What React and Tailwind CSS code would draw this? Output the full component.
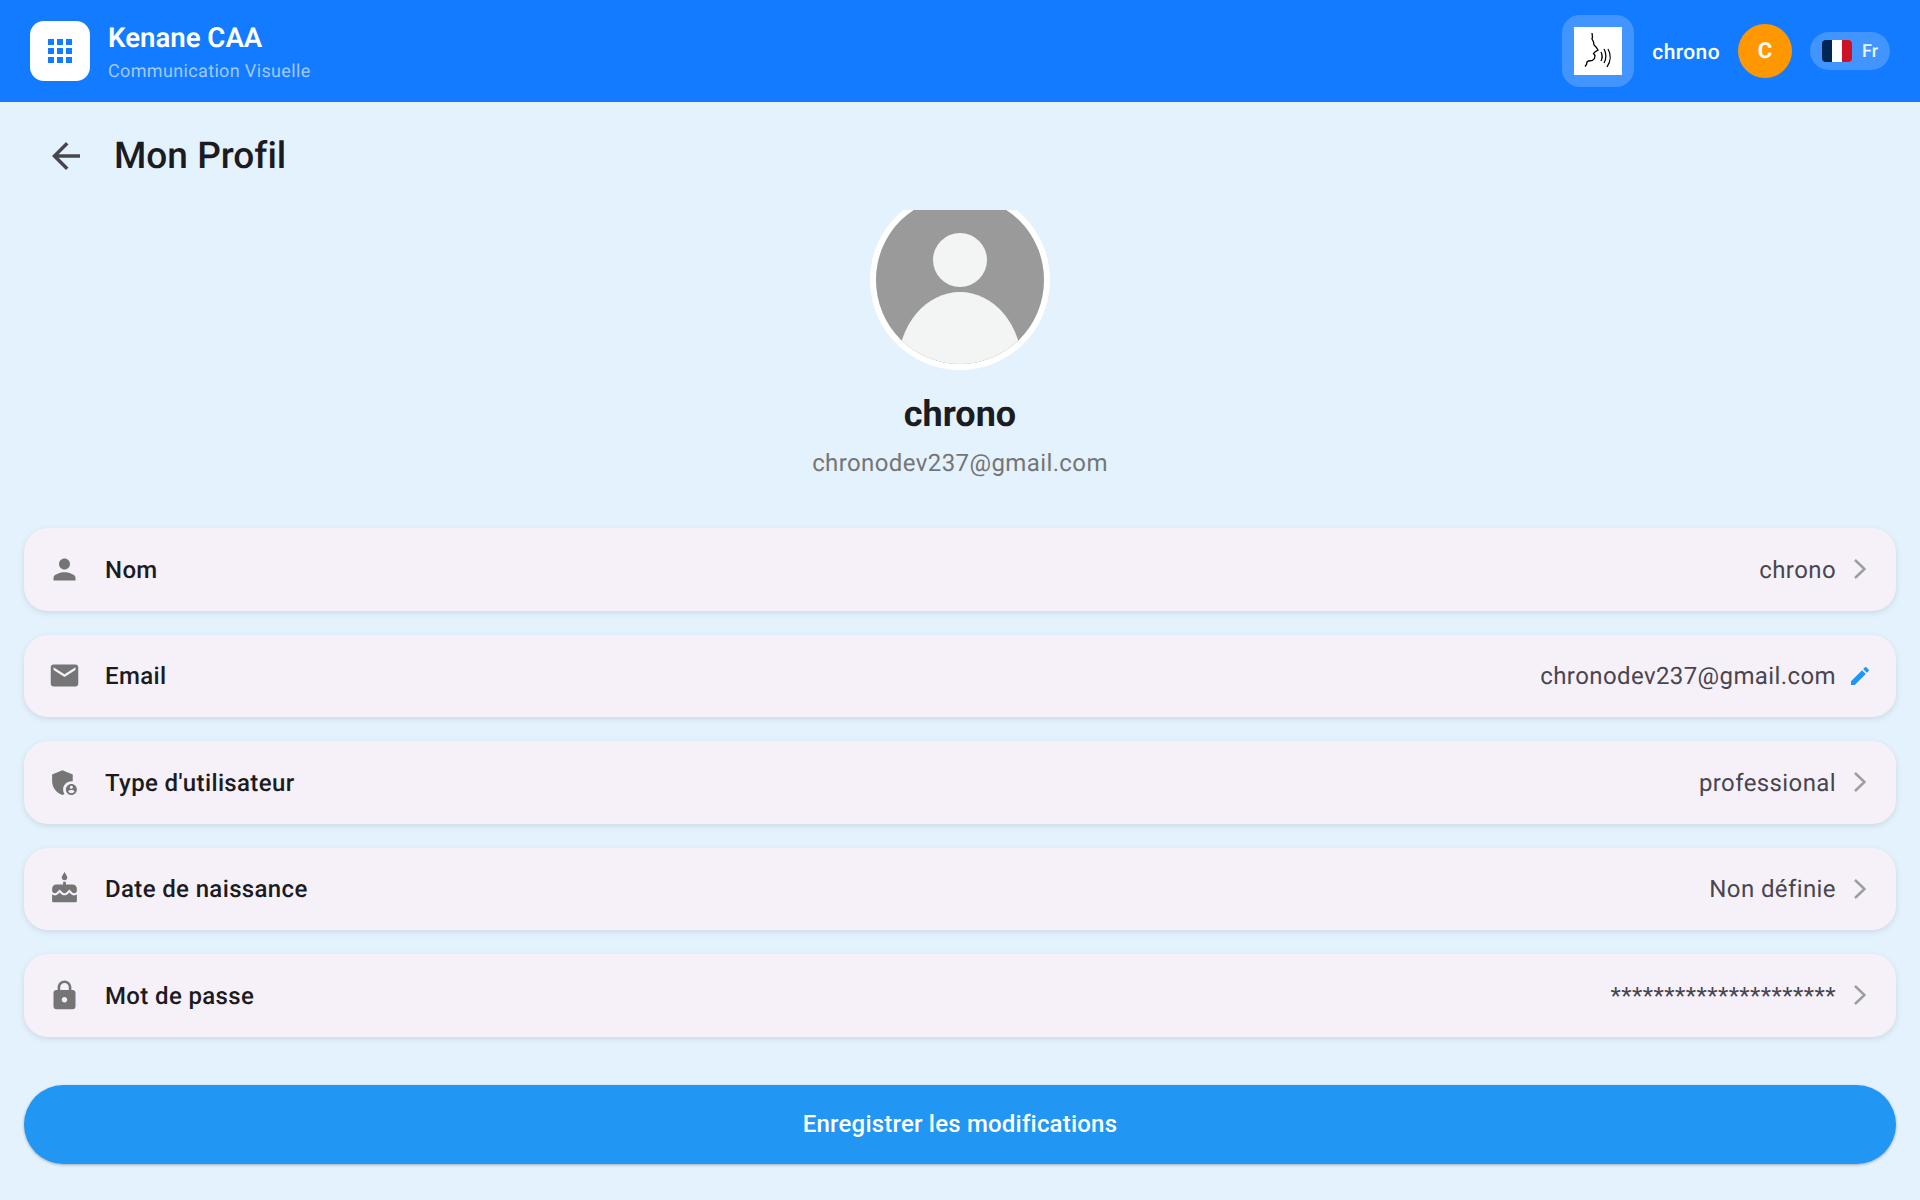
import React from 'react';
import { MdPerson, MdEmail, MdAdminPanelSettings, MdCake, MdLock, MdEdit, MdArrowBack } from 'react-icons/md';

const fields = [
  { icon: MdPerson, label: 'Nom', value: 'chrono' },
  { icon: MdEmail, label: 'Email', value: 'chronodev237@gmail.com', editable: true },
  { icon: MdAdminPanelSettings, label: "Type d'utilisateur", value: 'professional' },
  { icon: MdCake, label: 'Date de naissance', value: 'Non définie' },
  { icon: MdLock, label: 'Mot de passe', value: '*********************' },
];

const GridIcon = () => (
  <svg width="24" height="24" viewBox="0 0 24 24" fill="#137bff">
    {[0, 9, 18].map((y) =>
      [0, 9, 18].map((x) => <rect key={`${x}-${y}`} x={x} y={y} width="6" height="6" />)
    )}
  </svg>
);

const SpeechIcon = () => (
  <svg width="48" height="48" viewBox="0 0 48 48" fill="none" stroke="#000" strokeWidth="1.3" className="bg-white">
    <path d="M18 6l.5 4 -.5 2 1.500 3 .5 3 2 2 2 3-3 2-1.500 1.500 1.500 2-.5 3-2 2-4 .5-1.500 1-.5 2.500-1.500 2" />
    <path d="M27 25c1.500 3 1.500 6 0 9" />
    <path d="M30 22c2.500 4 2.500 10 0 14" />
    <path d="M34 22c3 5 3 12-1 18" />
  </svg>
);

const Chevron = () => (
  <svg width="12" height="20" viewBox="0 0 12 20" fill="none" stroke="#9e9e9e" strokeWidth="2.500">
    <path d="M1 1l9.500 9-9.500 9" />
  </svg>
);

const App = () => {
  return (
    <div className="h-[1200px] bg-[#e3f2fd] overflow-hidden font-['Roboto',sans-serif] [text-rendering:geometricPrecision] [font-variant-ligatures:none]">
      {/* Header */}
      <header className="h-[102px] bg-[#137bff] flex items-center pl-[30px] pr-[30px]">
        <div className="w-[60px] h-[60px] bg-white rounded-[14px] flex items-center justify-center">
          <GridIcon />
        </div>
        <div className="ml-[18px] mt-[2px] flex-1">
          <div className="text-[27.600px] leading-[36px] font-semibold text-white">Kenane CAA</div>
          <div className="text-[18px] leading-[24px] mt-[4px] tracking-[0.35px] text-white/60">Communication Visuelle</div>
        </div>
        <div className="w-[72px] h-[72px] rounded-[18px] bg-white/20 flex items-center justify-center">
          <SpeechIcon />
        </div>
        <span className="ml-[18px] mt-[5px] text-[21px] tracking-[0.4px] font-medium text-white">chrono</span>
        <div className="ml-[18px] w-[54px] h-[54px] rounded-full bg-[#ff9800] flex items-center justify-center text-white text-[22px] font-bold">
          C
        </div>
        <div className="ml-[18px] w-[80px] h-[38px] rounded-full bg-white/20 flex items-center pl-[12px]">
          <div className="w-[30px] h-[22px] rounded-[4px] overflow-hidden flex">
            <div className="flex-1 bg-[#002654]" />
            <div className="flex-1 bg-white" />
            <div className="flex-1 bg-[#ce1126]" />
          </div>
          <span className="ml-[10px] text-[18px] font-medium text-white/90">Fr</span>
        </div>
      </header>

      {/* Title */}
      <div className="h-[108px] flex items-center pl-[45px]">
        <MdArrowBack size={42} className="text-[#49454f]" />
        <h1 className="ml-[27px] mt-[1px] text-[37px] font-medium text-[#1c1b1f]">Mon Profil</h1>
      </div>

      {/* Scrolled content, the top of the avatar is cut off */}
      <div className="h-[990px] overflow-hidden">
        <div className="-mt-[20px] px-[24px] flex flex-col items-stretch">
          <div className="flex flex-col items-center">
            <div className="w-[180px] h-[180px] rounded-full border-[6.500px] border-white overflow-hidden">
              <svg className="w-full h-full" viewBox="0 0 168 168">
                <rect width="168" height="168" fill="#9a9a9a" />
                <circle cx="84" cy="64" r="27" fill="#f3f5f4" />
                <ellipse cx="84" cy="170" rx="62" ry="74" fill="#f3f5f4" />
              </svg>
            </div>
            <div className="mt-[22px] text-[36px] leading-[44px] font-bold text-[#1c1b1f]">chrono</div>
            <div className="mt-[11px] text-[24px] leading-[32px] tracking-[0.4px] text-[#757575]">chronodev237@gmail.com</div>
          </div>

          <div className="mt-[49px] flex flex-col gap-[24px]">
            {fields.map((f) => {
              const Icon = f.icon;
              return (
                <div
                  key={f.label}
                  className="h-[82.500px] bg-[#f6f1f9] rounded-[24px] shadow-[0_2px_6px_rgba(0,0,0,0.1)] flex items-center pl-[24px] pr-[30px]"
                >
                  <Icon size={33} className="text-[#757575]" />
                  <span className="ml-[24px] mt-[1px] flex-1 text-[24px] tracking-[0.36px] font-medium text-[#1c1b1f]">{f.label}</span>
                  <span className="mt-[1px] text-[24px] tracking-[0.4px] text-[#49454f]">{f.value}</span>
                  {f.editable ? (
                    <MdEdit size={24} className="ml-[12px] -mr-[6px] text-[#2196f3]" />
                  ) : (
                    <div className="ml-[18px] flex items-center">
                      <Chevron />
                    </div>
                  )}
                </div>
              );
            })}
          </div>

          <button className="mt-[48px] h-[79.500px] rounded-full bg-[#2196f3] shadow-[0_1px_3px_rgba(0,0,0,0.3)] text-white text-[24px] tracking-[0.2px] font-medium">
            Enregistrer les modifications
          </button>
        </div>
      </div>
    </div>
  );
};

export default App;
